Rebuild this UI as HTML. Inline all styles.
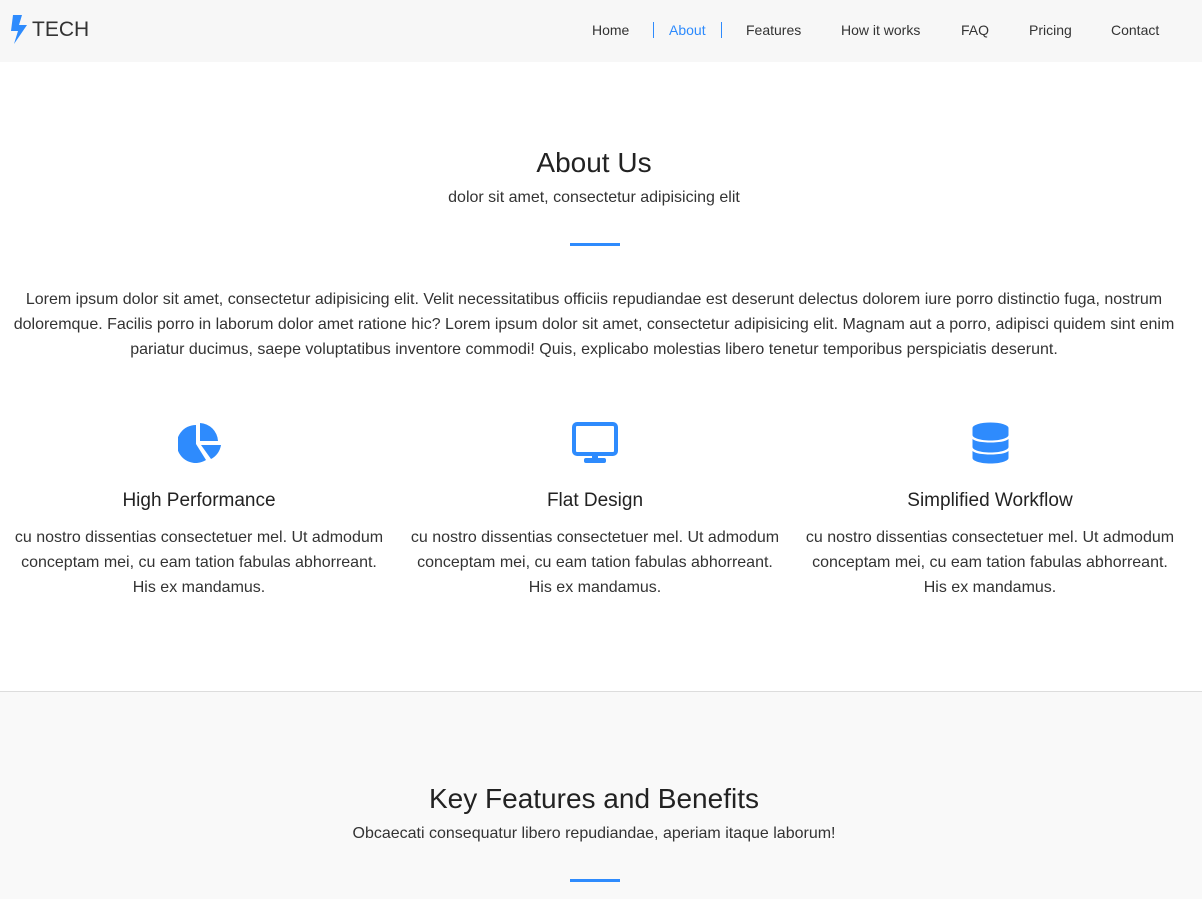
<!DOCTYPE html>
<html><head><meta charset="utf-8"><style>
*{margin:0;padding:0;box-sizing:border-box}
body{width:1202px;height:899px;overflow:hidden;font-family:"Liberation Sans",sans-serif;color:#333;background:#fff}
header{height:62px;background:#f7f7f7;position:relative}
.logo{position:absolute;left:9px;top:14px;display:flex;align-items:center}
.logo span{font-size:21px;color:#333;margin-left:3px;line-height:32px}
nav a{position:absolute;top:22px;font-size:14px;color:#333;text-decoration:none}
.sep{position:absolute;top:22px;width:1px;height:16px;background:#2e8bfd}
h2{font-weight:normal;font-size:28px;color:#222;text-align:center;position:absolute;left:0;width:1188px}
.sub{position:absolute;left:0;width:1188px;text-align:center;font-size:16px;color:#333}
.bar{position:absolute;left:570px;width:50px;height:3px;background:#2e8bfd}
.p{position:absolute;left:0;width:1188px;text-align:center;font-size:16px;line-height:25px;color:#333}
.col{position:absolute;top:490px;width:396px;text-align:center}
.col h3{font-weight:normal;font-size:19px;color:#222;margin-bottom:13px}
.col p{font-size:16px;line-height:25px;padding:0 10px}
.icon{position:absolute;top:422px}
.sec2{position:absolute;top:691px;left:0;width:1202px;height:208px;background:#f9f9f9;border-top:1px solid #ddd}
</style></head><body>
<header>
<div class="logo"><svg width="20" height="30" viewBox="0 0 20 30"><path d="M4 0h9l-3 10h8L5 29l4-13H2z" fill="#2e8bfd"/></svg><span>TECH</span></div>
<nav>
<a style="left:592px">Home</a><div class="sep" style="left:653px"></div>
<a style="left:669px;color:#2e8bfd">About</a><div class="sep" style="left:721px"></div>
<a style="left:746px">Features</a>
<a style="left:841px">How it works</a>
<a style="left:961px">FAQ</a>
<a style="left:1029px">Pricing</a>
<a style="left:1111px">Contact</a>
</nav>
</header>
<h2 style="top:147px">About Us</h2>
<div class="sub" style="top:189px">dolor sit amet, consectetur adipisicing elit</div>
<div class="bar" style="top:243px"></div>
<div class="p" style="top:287px;padding:0 8px">Lorem ipsum dolor sit amet, consectetur adipisicing elit. Velit necessitatibus officiis repudiandae est deserunt delectus dolorem iure porro distinctio fuga, nostrum doloremque. Facilis porro in laborum dolor amet ratione hic? Lorem ipsum dolor sit amet, consectetur adipisicing elit. Magnam aut a porro, adipisci quidem sint enim pariatur ducimus, saepe voluptatibus inventore commodi! Quis, explicabo molestias libero tenetur temporibus perspiciatis deserunt.</div>

<svg class="icon" style="left:178px" width="44" height="42" viewBox="0 0 44 42"><path d="M18 3A19 19 0 1 0 28 38L18 22Z" fill="#2e8bfd"/><path d="M22 1A19 19 0 0 1 40 19H22Z" fill="#2e8bfd"/><path d="M23 23H43A19 19 0 0 1 33 37Z" fill="#2e8bfd"/></svg>
<svg class="icon" style="left:572px" width="46" height="42" viewBox="0 0 46 42"><rect x="2" y="2" width="42" height="30" rx="3" fill="none" stroke="#2e8bfd" stroke-width="4"/><rect x="20" y="32" width="6" height="5" fill="#2e8bfd"/><rect x="12" y="36" width="22" height="5" rx="2" fill="#2e8bfd"/></svg>
<svg class="icon" style="left:972px" width="37" height="42" viewBox="0 0 37 42"><ellipse cx="18.5" cy="6" rx="18" ry="5.5" fill="#2e8bfd"/><path d="M0.5 6v7c0 3 8 5.5 18 5.5s18-2.5 18-5.5V6z" fill="#2e8bfd"/><path d="M0.5 17c3 2.5 10 3.5 18 3.5s15-1 18-3.5v8c0 3-8 5.5-18 5.5s-18-2.5-18-5.5z" fill="#2e8bfd"/><path d="M0.5 29c3 2.5 10 3.5 18 3.5s15-1 18-3.5v7c0 3-8 5.5-18 5.5s-18-2.5-18-5.5z" fill="#2e8bfd"/></svg>

<div class="col" style="left:1px"><h3>High Performance</h3><p>cu nostro dissentias consectetuer mel. Ut admodum conceptam mei, cu eam tation fabulas abhorreant. His ex mandamus.</p></div>
<div class="col" style="left:397px"><h3>Flat Design</h3><p>cu nostro dissentias consectetuer mel. Ut admodum conceptam mei, cu eam tation fabulas abhorreant. His ex mandamus.</p></div>
<div class="col" style="left:792px"><h3>Simplified Workflow</h3><p>cu nostro dissentias consectetuer mel. Ut admodum conceptam mei, cu eam tation fabulas abhorreant. His ex mandamus.</p></div>

<div class="sec2">
<h2 style="top:91px">Key Features and Benefits</h2>
<div class="sub" style="top:133px">Obcaecati consequatur libero repudiandae, aperiam itaque laborum!</div>
<div class="bar" style="top:187px"></div>
</div>
</body></html>
